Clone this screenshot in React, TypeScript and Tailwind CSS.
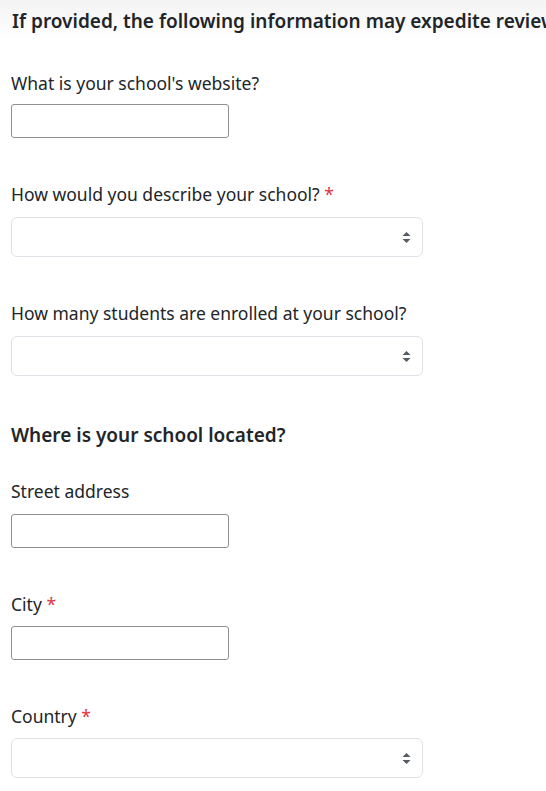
import type { ReactNode } from "react";

function Req() {
  return <span className="text-[#dc3545]"> *</span>;
}

function Label({ children }: { children: ReactNode }) {
  return <label className="block text-[17.5px] leading-6 text-[#212529]">{children}</label>;
}

function TextInput() {
  return (
    <input
      type="text"
      className="block w-[218px] h-[34px] rounded-[3px] border border-[#8f8f8f] bg-white"
    />
  );
}

function SelectBox() {
  return (
    <div className="relative w-[412px] h-[40px] rounded-[6px] border border-[#dee2e6] bg-white">
      <svg
        className="absolute right-[11px] top-[13px]"
        width="9"
        height="13"
        viewBox="0 0 9 13"
        fill="#555b61"
      >
        <path d="M4.5 1 L8.5 5 L0.5 5 Z" />
        <path d="M0.5 8 L8.5 8 L4.5 12 Z" />
      </svg>
    </div>
  );
}

export default function App() {
  return (
    <div className="min-h-[791px] bg-white font-['Noto_Sans',sans-serif] text-[#212529]">
      <div className="h-[40px] bg-gradient-to-b from-[#f3f3f3] to-white pl-[12px] pt-[9px] whitespace-nowrap overflow-hidden">
        <p className="text-[19px] font-semibold leading-6">
          If provided, the following information may expedite review
        </p>
      </div>

      <div className="pl-[11px]">
        <div className="mt-[31px]">
          <Label>What is your school's website?</Label>
          <div className="mt-[9px]">
            <TextInput />
          </div>
        </div>

        <div className="mt-[44px]">
          <Label>
            How would you describe your school?<Req />
          </Label>
          <div className="mt-[11px]">
            <SelectBox />
          </div>
        </div>

        <div className="mt-[44px]">
          <Label>How many students are enrolled at your school?</Label>
          <div className="mt-[11px]">
            <SelectBox />
          </div>
        </div>

        <h2 className="mt-[45px] text-[19px] font-semibold leading-7">Where is your school located?</h2>

        <div className="mt-[30px]">
          <Label>Street address</Label>
          <div className="mt-[11px]">
            <TextInput />
          </div>
        </div>

        <div className="mt-[44px]">
          <Label>
            City<Req />
          </Label>
          <div className="mt-[10px]">
            <TextInput />
          </div>
        </div>

        <div className="mt-[44px]">
          <Label>
            Country<Req />
          </Label>
          <div className="mt-[10px]">
            <SelectBox />
          </div>
        </div>
      </div>
    </div>
  );
}
